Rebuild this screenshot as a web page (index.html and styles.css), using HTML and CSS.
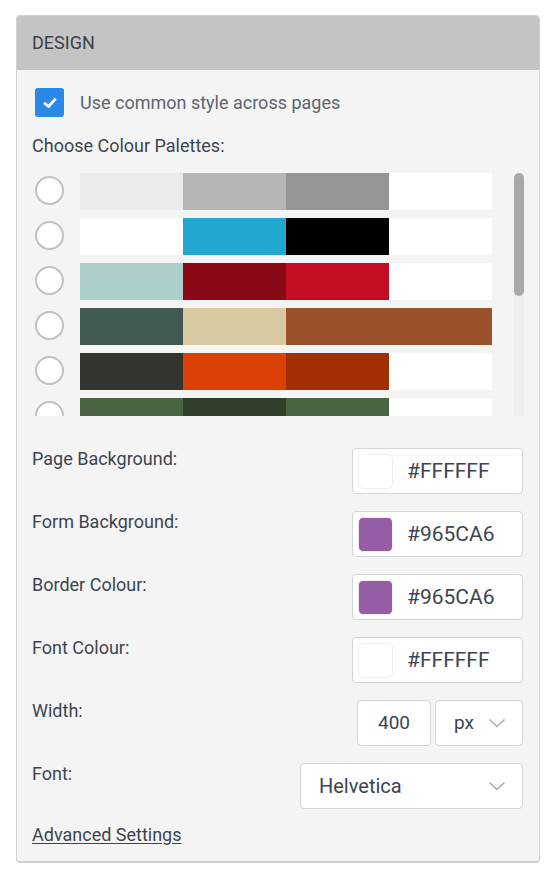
FILE: index.html
```html
<!DOCTYPE html>
<html>
<head>
<meta charset="utf-8">
<link rel="stylesheet" href="styles.css">
</head>
<body>
<div class="panel">
  <div class="panel-header">DESIGN</div>
  <div class="panel-body">
    <label class="check-row">
      <span class="checkbox">
        <svg width="16" height="16" viewBox="0 0 16 16"><polyline points="3,8.5 6.5,11.5 13,4.5" fill="none" stroke="#fff" stroke-width="2.8" stroke-linecap="round" stroke-linejoin="round"/></svg>
      </span>
      <span class="check-text">Use common style across pages</span>
    </label>

    <div class="section-label">Choose Colour Palettes:</div>

    <div class="palette-box">
      <div class="palettes">
        <div class="pal-row"><span class="radio"></span><div class="bar"><span style="background:#ebebeb"></span><span style="background:#b5b5b5"></span><span style="background:#959595"></span><span style="background:#ffffff"></span></div></div>
        <div class="pal-row"><span class="radio"></span><div class="bar"><span style="background:#ffffff"></span><span style="background:#22a7cf"></span><span style="background:#000000"></span><span style="background:#ffffff"></span></div></div>
        <div class="pal-row"><span class="radio"></span><div class="bar"><span style="background:#accfcc"></span><span style="background:#8a0917"></span><span style="background:#c30d23"></span><span style="background:#ffffff"></span></div></div>
        <div class="pal-row"><span class="radio"></span><div class="bar"><span style="background:#415a53"></span><span style="background:#d9c9a0"></span><span class="span2" style="background:#9c512d"></span></div></div>
        <div class="pal-row"><span class="radio"></span><div class="bar"><span style="background:#33342d"></span><span style="background:#db4105"></span><span style="background:#a03003"></span><span style="background:#ffffff"></span></div></div>
        <div class="pal-row"><span class="radio"></span><div class="bar"><span style="background:#4a6340"></span><span style="background:#2f3f2a"></span><span style="background:#4a6340"></span><span style="background:#ffffff"></span></div></div>
        <div class="pal-row"><span class="radio"></span><div class="bar"><span style="background:#f2e6d0"></span><span style="background:#6b8fb3"></span><span style="background:#2c3e50"></span><span style="background:#ffffff"></span></div></div>
        <div class="pal-row"><span class="radio"></span><div class="bar"><span style="background:#fafafa"></span><span style="background:#e67e22"></span><span style="background:#34495e"></span><span style="background:#ffffff"></span></div></div>
        <div class="pal-row"><span class="radio"></span><div class="bar"><span style="background:#dfe8d0"></span><span style="background:#5a8f29"></span><span style="background:#2e4a16"></span><span style="background:#ffffff"></span></div></div>
        <div class="pal-row"><span class="radio"></span><div class="bar"><span style="background:#f5e1e8"></span><span style="background:#965ca6"></span><span style="background:#4b2a57"></span><span style="background:#ffffff"></span></div></div>
        <div class="pal-row"><span class="radio"></span><div class="bar"><span style="background:#e0f0f5"></span><span style="background:#1f7a99"></span><span style="background:#0e3a4a"></span><span style="background:#ffffff"></span></div></div>
      </div>
      <div class="scroll-track"><div class="scroll-thumb"></div></div>
    </div>

    <div class="form-row first">
      <div class="label">Page Background:</div>
      <div class="color-input"><span class="swatch" style="background:#ffffff"></span><span class="hex">#FFFFFF</span></div>
    </div>
    <div class="form-row">
      <div class="label">Form Background:</div>
      <div class="color-input"><span class="swatch" style="background:#965ca6"></span><span class="hex">#965CA6</span></div>
    </div>
    <div class="form-row">
      <div class="label">Border Colour:</div>
      <div class="color-input"><span class="swatch" style="background:#965ca6"></span><span class="hex">#965CA6</span></div>
    </div>
    <div class="form-row">
      <div class="label">Font Colour:</div>
      <div class="color-input"><span class="swatch" style="background:#ffffff"></span><span class="hex">#FFFFFF</span></div>
    </div>
    <div class="form-row">
      <div class="label">Width:</div>
      <div class="width-group">
        <div class="num-input">400</div>
        <div class="select unit-select"><span>px</span>
          <svg class="chev" width="18" height="10" viewBox="0 0 18 10"><polyline points="1.5,1.5 9,8.5 16.5,1.5" fill="none" stroke="#a9acb1" stroke-width="1.6"/></svg>
        </div>
      </div>
    </div>
    <div class="form-row">
      <div class="label">Font:</div>
      <div class="select font-select"><span>Helvetica</span>
        <svg class="chev" width="18" height="10" viewBox="0 0 18 10"><polyline points="1.5,1.5 9,8.5 16.5,1.5" fill="none" stroke="#a9acb1" stroke-width="1.6"/></svg>
      </div>
    </div>

    <a class="advanced" href="#">Advanced Settings</a>
  </div>
</div>
</body>
</html>
```

FILE: styles.css
```css
html, body {
  margin: 0;
  padding: 0;
  background: #ffffff;
}

body {
  font-family: Roboto, "Liberation Sans", Arial, sans-serif;
  color: #3d4450;
  font-size: 18px;
  line-height: 22px;
}

.panel {
  margin: 15px 0 0 16px;
  width: 524px;
  box-sizing: border-box;
  background: #f4f4f4;
  border: 1px solid #d2d2d2;
  border-bottom: 2px solid #d0d0d0;
  border-radius: 4px;
  overflow: hidden;
}

.panel-header {
  height: 54px;
  line-height: 54px;
  background: #c4c4c4;
  padding-left: 15px;
  color: #3b414a;
  font-size: 18px;
}

.panel-body {
  padding: 18px 15px 15px 15px;
  display: flex;
  flex-direction: column;
}

.check-row {
  display: flex;
  align-items: center;
  height: 29px;
  padding-left: 3px;
  gap: 16px;
}

.checkbox {
  width: 29px;
  height: 29px;
  border-radius: 3px;
  background: #2a88e6;
  display: flex;
  align-items: center;
  justify-content: center;
  flex: none;
}

.check-text {
  color: #5d6470;
  font-size: 18px;
}

.section-label {
  margin-top: 18px;
}

.palette-box {
  margin-top: 16px;
  height: 243px;
  display: flex;
}

.palettes {
  flex: 1;
  height: 243px;
  overflow: hidden;
  padding-right: 22px;
}

.scroll-track {
  width: 10px;
  height: 243px;
  background: #eeeeee;
  flex: none;
}

.scroll-thumb {
  width: 10px;
  height: 123px;
  background: #a9a9a9;
  border-radius: 5px;
}

.pal-row {
  display: flex;
  align-items: center;
  height: 37px;
  margin-bottom: 8px;
  padding-left: 3px;
  gap: 16px;
}
.pal-row:last-child {
  margin-bottom: 0;
}

.radio {
  width: 29px;
  height: 29px;
  box-sizing: border-box;
  border: 2.5px solid #bfc1c4;
  border-radius: 50%;
  background: #ffffff;
  flex: none;
  margin-top: -2px;
}

.bar {
  flex: 1;
  height: 37px;
  display: grid;
  grid-template-columns: repeat(4, 1fr);
}
.bar .span2 {
  grid-column: span 2;
}

.form-row {
  display: flex;
  justify-content: space-between;
  align-items: flex-start;
  margin-bottom: 17px;
  padding-right: 1px;
}
.form-row.first {
  margin-top: 32px;
}

.color-input {
  width: 171px;
  height: 46px;
  box-sizing: border-box;
  background: #ffffff;
  border: 1.5px solid #d3d6d9;
  border-radius: 4px;
  display: flex;
  align-items: center;
  padding-left: 5px;
  gap: 14px;
}

.swatch {
  width: 35px;
  height: 35px;
  box-sizing: border-box;
  border: 1px solid #eceef0;
  border-radius: 5px;
  flex: none;
}

.hex {
  font-size: 21px;
  color: #3d4450;
}

.width-group {
  display: flex;
  gap: 4px;
}

.num-input {
  width: 74px;
  height: 46px;
  box-sizing: border-box;
  background: #ffffff;
  border: 1.5px solid #d3d6d9;
  border-radius: 4px;
  display: flex;
  align-items: center;
  justify-content: center;
  font-size: 19px;
}

.select {
  height: 46px;
  box-sizing: border-box;
  background: #ffffff;
  border: 1.5px solid #d3d6d9;
  border-radius: 4px;
  display: flex;
  align-items: center;
  justify-content: space-between;
  font-size: 19px;
  padding-right: 16px;
}

.unit-select {
  width: 88px;
  padding-left: 18px;
}

.font-select {
  width: 223px;
  padding-left: 18px;
  font-size: 20px;
}

.chev {
  display: block;
  flex: none;
}

.advanced {
  margin-top: -2px;
  color: #3d4450;
  text-decoration: underline;
  text-underline-offset: 2px;
  align-self: flex-start;
}
```
